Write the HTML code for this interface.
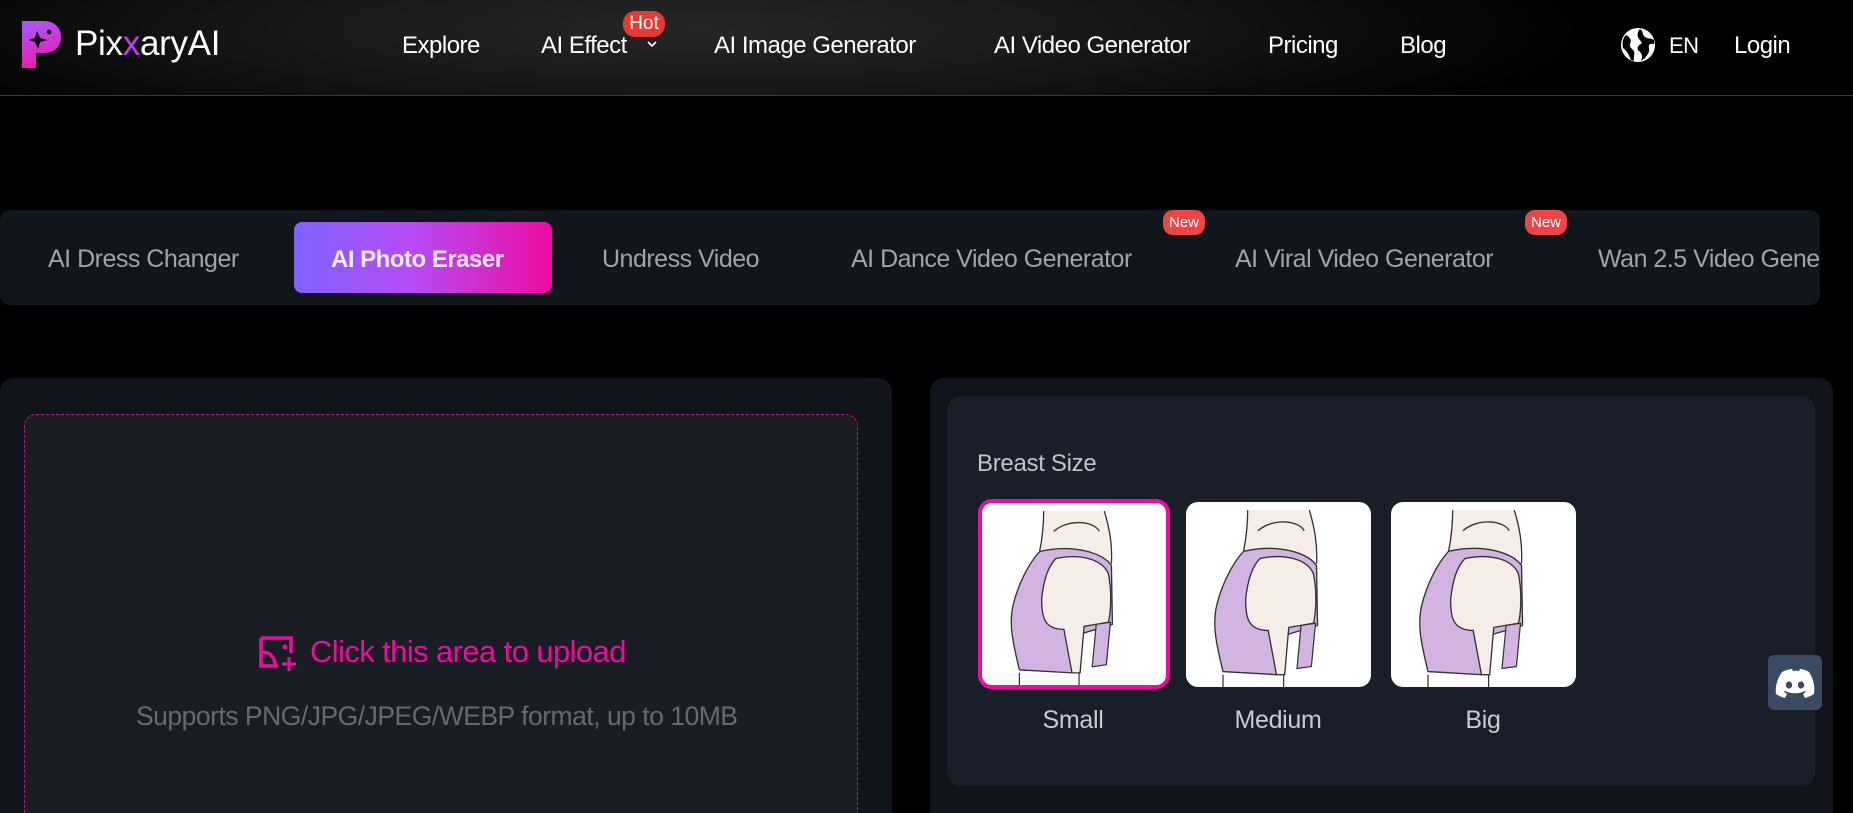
<!DOCTYPE html>
<html><head><meta charset="utf-8"><style>
*{margin:0;padding:0;box-sizing:border-box}
html,body{width:1853px;height:813px;overflow:hidden}
body{background:#000;font-family:"Liberation Sans",sans-serif;position:relative}
.abs{position:absolute}
.nav{left:0;top:0;width:1853px;height:96px;border-bottom:1px solid #3a3a3a;background:radial-gradient(ellipse 900px 130px at 700px 30px,#262626 0%,#161616 50%,#000 100%)}
.nav a{position:absolute;top:32px;color:#fff;font-size:24px;white-space:nowrap;letter-spacing:-0.5px}
.badge{position:absolute;background:#e53935;color:#fff;border-radius:12px;text-align:center}
.tabs{left:0;top:210px;width:1820px;height:95px;background:#11151c;border-radius:10px;overflow:hidden}
.tab{position:absolute;top:35px;color:#9fa3aa;font-size:25px;white-space:nowrap;letter-spacing:-0.5px}
.panel{background:#11141a;border-radius:14px 14px 0 0}
.lbl{position:absolute;top:706px;color:#c7cad0;font-size:25px;width:190px;text-align:center;letter-spacing:-0.3px}
.thumb{position:absolute;background:#fff;border-radius:12px;overflow:hidden}
</style></head><body>
<div class="abs nav">
  <svg class="abs" style="left:20px;top:21px" width="42" height="47" viewBox="0 0 42 47">
    <defs><linearGradient id="lg" x1="0" y1="0" x2="0.3" y2="1"><stop offset="0" stop-color="#a25cff"/><stop offset="1" stop-color="#f01ab0"/></linearGradient></defs>
    <path d="M2 0H24C35 0 41 7 41 16C41 26 34 32 24 32H16V47H2Z" fill="url(#lg)"/>
    <path d="M17 10L20 17L27 19L20 21L18 28L15 21L9 19L15 17Z" fill="#000"/>
    <circle cx="29" cy="11" r="2.2" fill="#000"/>
  </svg>
  <div class="abs" style="left:75px;top:24px;color:#fff;font-size:35px;letter-spacing:-0.3px">Pix<span style="color:#c23cf0">x</span>aryAI</div>
  <a style="left:402px">Explore</a>
  <a style="left:541px">AI Effect</a>
  <svg class="abs" style="left:646px;top:40px" width="12" height="8" viewBox="0 0 12 8"><path d="M2 2L6 6L10 2" stroke="#fff" stroke-width="1.6" fill="none"/></svg>
  <div class="badge" style="left:623px;top:11px;width:42px;height:26px;font-size:19px;line-height:26px">Hot</div>
  <a style="left:714px">AI Image Generator</a>
  <a style="left:994px">AI Video Generator</a>
  <a style="left:1268px">Pricing</a>
  <a style="left:1400px">Blog</a>
  <svg class="abs" style="left:1620px;top:27px" width="36" height="36" viewBox="0 0 36 36"><circle cx="18" cy="18" r="17" fill="#fff"/><path d="M6 8C10 10 12 13 10 17C9 20 12 22 14 24C15 28 13 31 14 34L11 33C9 28 7 24 3 21C2 15 3 11 6 8ZM20 2C24 5 22 8 25 10C28 12 31 11 34 13L34 17C30 16 28 18 29 21C30 25 27 28 25 31L21 34C23 30 22 26 19 24C16 22 18 18 21 17C23 15 19 13 18 10C17 7 18 4 20 2Z" fill="#000"/></svg>
  <a style="left:1669px;font-size:22px;top:33px">EN</a>
  <a style="left:1734px">Login</a>
</div>

<div class="abs tabs">
  <div class="tab" style="left:48px">AI Dress Changer</div>
  <div class="abs" style="left:294px;top:12px;width:258px;height:71px;border-radius:8px;background:linear-gradient(90deg,#7f63ff 0%,#b54cf8 45%,#ee0ba0 100%)"></div>
  <div class="tab" style="left:331px;color:#f3e8ff;font-weight:bold;font-size:24px;top:36px">AI Photo Eraser</div>
  <div class="tab" style="left:602px">Undress Video</div>
  <div class="tab" style="left:851px">AI Dance Video Generator</div>
  <div class="tab" style="left:1235px">AI Viral Video Generator</div>
  <div class="tab" style="left:1598px">Wan 2.5 Video Generator</div>
  <div class="badge" style="left:1163px;top:0;width:42px;height:25px;font-size:15px;line-height:25px;border-radius:10px;background:#ef4444">New</div>
  <div class="badge" style="left:1525px;top:0;width:42px;height:25px;font-size:15px;line-height:25px;border-radius:10px;background:#ef4444">New</div>
</div>

<div class="abs panel" style="left:0;top:378px;width:892px;height:435px"></div>
<div class="abs" style="left:24px;top:414px;width:834px;height:399px;background:#1a1d24;border:1px dashed #c01580;border-bottom:none;border-radius:12px 12px 0 0"></div>
<svg class="abs" style="left:258px;top:635px" width="40" height="38" viewBox="0 0 40 38"><path d="M3 3H33V18M3 3V31H20M3 17C12 17 17 22 17 31" stroke="#ec0c9f" stroke-width="3.5" fill="none"/><circle cx="27" cy="12" r="2.5" fill="#ec0c9f"/><path d="M31 22V36M24 29H38" stroke="#ec0c9f" stroke-width="3"/></svg>
<div class="abs" style="left:310px;top:634px;color:#ec0c9f;font-size:31px;letter-spacing:-0.6px">Click this area to upload</div>
<div class="abs" style="left:136px;top:701px;color:#67696f;font-size:26.5px;letter-spacing:-0.5px">Supports PNG/JPG/JPEG/WEBP format, up to 10MB</div>

<div class="abs panel" style="left:930px;top:378px;width:903px;height:435px"></div>
<div class="abs" style="left:947px;top:396px;width:868px;height:390px;background:#191e28;border-radius:14px"></div>
<div class="abs" style="left:977px;top:450px;color:#c0c3c8;font-size:24px;letter-spacing:-0.3px">Breast Size</div>

<svg width="0" height="0" style="position:absolute"><defs>
<g id="fig">
<path d="M60 8C60 30 58 40 56 50L125 55C128 40 124 25 120 8Z" fill="#f6ece8"/>
<path d="M70 28C85 15 110 18 115 28" stroke="#333" stroke-width="1.3" fill="none"/>
<path d="M60 8C60 25 58 38 56 48M120 8C125 25 128 40 127 60" stroke="#333" stroke-width="1.3" fill="none"/>
<path d="M56 48C45 60 35 80 30 100C25 120 30 140 36 165L88 168L95 130L128 120L127 62C120 50 90 40 56 48Z" fill="#d3b3e1" stroke="#333" stroke-width="1.3"/>
<path d="M72 55C95 50 118 55 124 70C128 90 126 110 124 118L100 122L96 168H88L80 125C60 125 58 112 58 95C60 75 65 62 72 55Z" fill="#f6ece8" stroke="#333" stroke-width="1.3"/>
<path d="M112 120L126 118L122 160L108 162Z" fill="#d3b3e1" stroke="#333" stroke-width="1.2"/>
<path d="M36 168V182M95 168V182" stroke="#333" stroke-width="1.2"/>
</g></defs></svg>

<div class="thumb" style="left:978px;top:499px;width:192px;height:190px;border:4px solid #ec0c9f;border-radius:14px"><svg width="184" height="182" viewBox="0 0 180 180"><use href="#fig"/></svg></div>
<div class="thumb" style="left:1186px;top:502px;width:185px;height:185px"><svg width="185" height="185" viewBox="0 0 180 180"><use href="#fig"/></svg></div>
<div class="thumb" style="left:1391px;top:502px;width:185px;height:185px"><svg width="185" height="185" viewBox="0 0 180 180"><use href="#fig"/></svg></div>
<div class="lbl" style="left:978px">Small</div>
<div class="lbl" style="left:1183px">Medium</div>
<div class="lbl" style="left:1388px">Big</div>

<div class="abs" style="left:1768px;top:655px;width:54px;height:55px;background:#3b4a63;border-radius:6px"></div>
<svg class="abs" style="left:1774px;top:668px" width="42" height="30" viewBox="0 0 42 30"><path d="M8 4C12 2 16 1 18 1L19 3C21 2.7 23 2.7 25 3L26 1C28 1 32 2 35 4C40 12 41 19 40 26C37 28 34 29 31 30L29 26L32 24L31 23C25 26 17 26 11 23L10 24L13 26L11 30C8 29 5 28 2 26C1 19 3 11 8 4Z" fill="#fff"/><ellipse cx="15" cy="17" rx="3.2" ry="3.6" fill="#3b4a63"/><ellipse cx="27" cy="17" rx="3.2" ry="3.6" fill="#3b4a63"/></svg>
</body></html>
